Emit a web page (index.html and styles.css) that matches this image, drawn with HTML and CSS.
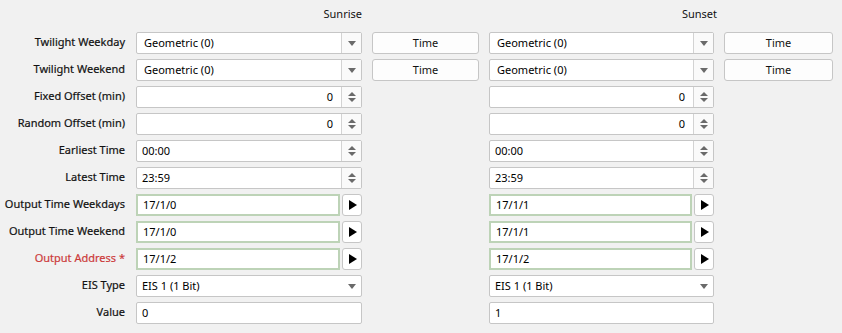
FILE: index.html
```html
<!DOCTYPE html>
<html>
<head>
<meta charset="utf-8">
<link rel="stylesheet" href="styles.css">
</head>
<body>
<div class="form">
  <div></div><div class="hdr">Sunrise</div><div></div><div class="hdr hdr-set">Sunset</div><div></div>

  <div class="lbl">Twilight Weekday</div>
  <div class="box combo"><span class="val">Geometric (0)</span><span class="side"><i class="tri-down"></i></span></div>
  <div class="btn">Time</div>
  <div class="box combo"><span class="val">Geometric (0)</span><span class="side"><i class="tri-down"></i></span></div>
  <div class="btn">Time</div>

  <div class="lbl">Twilight Weekend</div>
  <div class="box combo"><span class="val">Geometric (0)</span><span class="side"><i class="tri-down"></i></span></div>
  <div class="btn">Time</div>
  <div class="box combo"><span class="val">Geometric (0)</span><span class="side"><i class="tri-down"></i></span></div>
  <div class="btn">Time</div>

  <div class="lbl">Fixed Offset (min)</div>
  <div class="box spin"><span class="val num">0</span><span class="side"><i class="tri-up"></i><i class="tri-down sm"></i></span></div>
  <div></div>
  <div class="box spin"><span class="val num">0</span><span class="side"><i class="tri-up"></i><i class="tri-down sm"></i></span></div>
  <div></div>

  <div class="lbl">Random Offset (min)</div>
  <div class="box spin"><span class="val num">0</span><span class="side"><i class="tri-up"></i><i class="tri-down sm"></i></span></div>
  <div></div>
  <div class="box spin"><span class="val num">0</span><span class="side"><i class="tri-up"></i><i class="tri-down sm"></i></span></div>
  <div></div>

  <div class="lbl">Earliest Time</div>
  <div class="box spin"><span class="val edit">00:00</span><span class="side"><i class="tri-up"></i><i class="tri-down sm"></i></span></div>
  <div></div>
  <div class="box spin"><span class="val edit">00:00</span><span class="side"><i class="tri-up"></i><i class="tri-down sm"></i></span></div>
  <div></div>

  <div class="lbl">Latest Time</div>
  <div class="box spin"><span class="val edit">23:59</span><span class="side"><i class="tri-up"></i><i class="tri-down sm"></i></span></div>
  <div></div>
  <div class="box spin"><span class="val edit">23:59</span><span class="side"><i class="tri-up"></i><i class="tri-down sm"></i></span></div>
  <div></div>

  <div class="lbl">Output Time Weekdays</div>
  <div class="ga"><span class="gfield">17/1/0</span><span class="go"><i class="tri-right"></i></span></div>
  <div></div>
  <div class="ga"><span class="gfield">17/1/1</span><span class="go"><i class="tri-right"></i></span></div>
  <div></div>

  <div class="lbl">Output Time Weekend</div>
  <div class="ga"><span class="gfield">17/1/0</span><span class="go"><i class="tri-right"></i></span></div>
  <div></div>
  <div class="ga"><span class="gfield">17/1/1</span><span class="go"><i class="tri-right"></i></span></div>
  <div></div>

  <div class="lbl req">Output Address *</div>
  <div class="ga"><span class="gfield">17/1/2</span><span class="go"><i class="tri-right"></i></span></div>
  <div></div>
  <div class="ga"><span class="gfield">17/1/2</span><span class="go"><i class="tri-right"></i></span></div>
  <div></div>

  <div class="lbl">EIS Type</div>
  <div class="box eis"><span class="val edit">EIS 1 (1 Bit)</span><span class="eside"><i class="tri-down"></i></span></div>
  <div></div>
  <div class="box eis"><span class="val edit">EIS 1 (1 Bit)</span><span class="eside"><i class="tri-down"></i></span></div>
  <div></div>

  <div class="lbl">Value</div>
  <div class="box"><span class="val edit">0</span></div>
  <div></div>
  <div class="box"><span class="val edit">1</span></div>
  <div></div>
</div>
</body>
</html>
```
FILE: styles.css
```css
html, body {
  margin: 0;
  padding: 0;
  background: #f1f1f1;
  font-family: "Noto Sans", "Open Sans", sans-serif;
  font-size: 11px;
  color: #000;
}
.form {
  display: grid;
  grid-template-columns: 126px 226px 107px 225px 109px;
  grid-template-rows: 27px repeat(11, 22px);
  column-gap: 10px;
  row-gap: 5px;
}
.hdr {
  display: flex;
  align-items: center;
  justify-content: flex-end;
  padding-bottom: 1px;
  color: #111;
}
.hdr-set {
  margin-right: -3px;
}
.lbl {
  display: flex;
  align-items: center;
  justify-content: flex-end;
  white-space: nowrap;
  color: #111;
  padding-bottom: 3px;
  padding-right: 1px;
  -webkit-text-stroke: 0.2px #111;
}
.lbl.req {
  color: #cc3a3a;
  -webkit-text-stroke: 0.2px #cc3a3a;
}
.box {
  box-sizing: border-box;
  background: #fff;
  border: 1px solid #c6c6c6;
  border-radius: 2px;
  display: flex;
  align-items: stretch;
  height: 22px;
}
.val {
  flex: 1;
  display: flex;
  align-items: center;
  padding-left: 7px;
  padding-bottom: 1px;
  white-space: nowrap;
}
.val.edit {
  padding-left: 5px;
}
.val.num {
  justify-content: flex-end;
  padding-right: 8px;
}
.side {
  width: 19px;
  border-left: 1px solid #d3d3d3;
  background: #fafafa;
  display: flex;
  flex-direction: column;
  align-items: center;
  justify-content: center;
  gap: 2px;
}
.eside {
  width: 19px;
  display: flex;
  align-items: center;
  justify-content: center;
}
.tri-down {
  display: block;
  width: 0;
  height: 0;
  border-left: 4px solid transparent;
  border-right: 4px solid transparent;
  border-top: 5px solid #6a6a6a;
}
.tri-down.sm {
  border-top-width: 4px;
}
.tri-up {
  display: block;
  width: 0;
  height: 0;
  border-left: 4px solid transparent;
  border-right: 4px solid transparent;
  border-bottom: 4px solid #6a6a6a;
}
.btn {
  box-sizing: border-box;
  background: #fdfdfd;
  border: 1px solid #c6c6c6;
  border-radius: 3px;
  display: flex;
  align-items: center;
  justify-content: center;
  padding-bottom: 1px;
  color: #111;
}
.ga {
  display: flex;
  gap: 2px;
  height: 22px;
}
.gfield {
  box-sizing: border-box;
  flex: 1;
  background: #fff;
  border: 2px solid #bdd3b7;
  display: flex;
  align-items: center;
  padding-left: 5px;
  padding-bottom: 1px;
}
.go {
  box-sizing: border-box;
  width: 20px;
  background: #fff;
  border: 1px solid #c6c6c6;
  border-radius: 3px;
  display: flex;
  align-items: center;
  justify-content: center;
}
.tri-right {
  display: block;
  width: 0;
  height: 0;
  border-top: 5px solid transparent;
  border-bottom: 5px solid transparent;
  border-left: 8px solid #000;
  margin-left: 1px;
}
```
